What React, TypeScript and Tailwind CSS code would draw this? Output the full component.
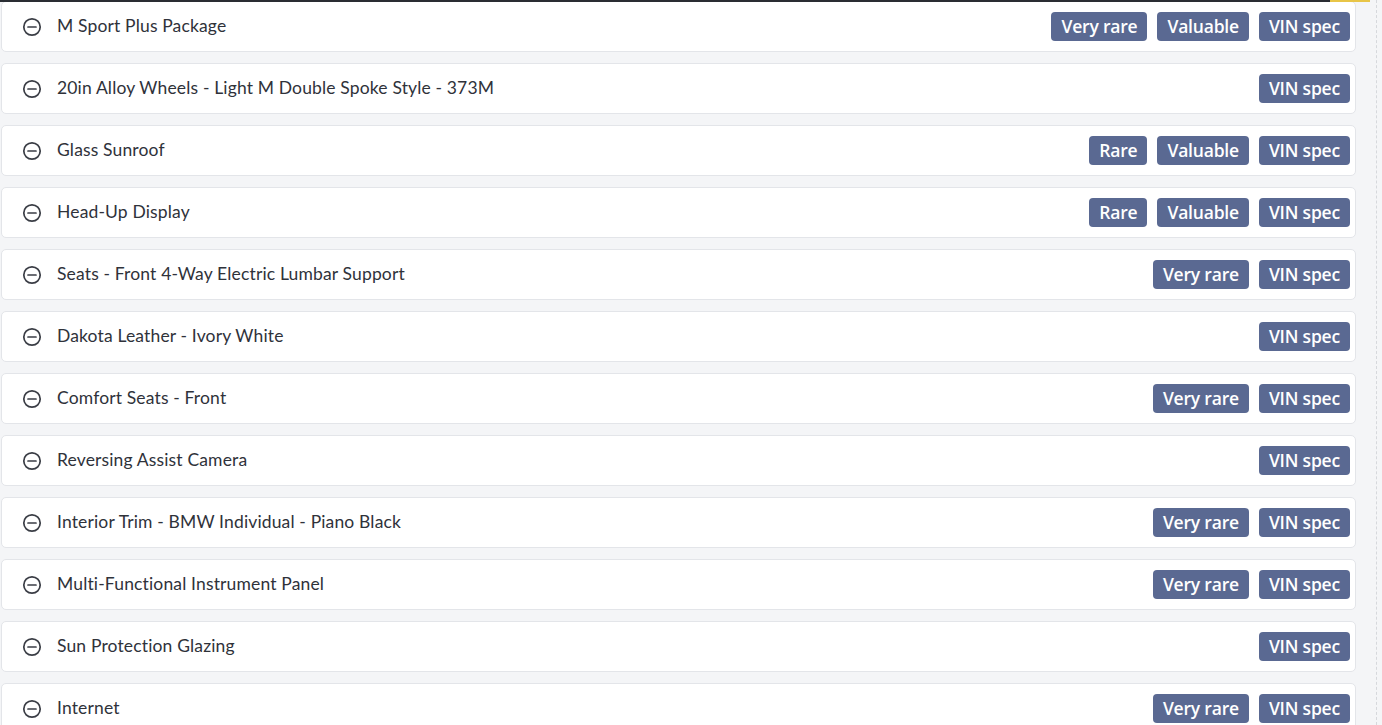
import React from "react";

const rows: { name: string; tags: string[] }[] = [
  { name: "M Sport Plus Package", tags: ["Very rare", "Valuable", "VIN spec"] },
  { name: "20in Alloy Wheels - Light M Double Spoke Style - 373M", tags: ["VIN spec"] },
  { name: "Glass Sunroof", tags: ["Rare", "Valuable", "VIN spec"] },
  { name: "Head-Up Display", tags: ["Rare", "Valuable", "VIN spec"] },
  { name: "Seats - Front 4-Way Electric Lumbar Support", tags: ["Very rare", "VIN spec"] },
  { name: "Dakota Leather - Ivory White", tags: ["VIN spec"] },
  { name: "Comfort Seats - Front", tags: ["Very rare", "VIN spec"] },
  { name: "Reversing Assist Camera", tags: ["VIN spec"] },
  { name: "Interior Trim - BMW Individual - Piano Black", tags: ["Very rare", "VIN spec"] },
  { name: "Multi-Functional Instrument Panel", tags: ["Very rare", "VIN spec"] },
  { name: "Sun Protection Glazing", tags: ["VIN spec"] },
  { name: "Internet", tags: ["Very rare", "VIN spec"] },
];

function MinusCircle() {
  return (
    <svg width="20" height="20" viewBox="0 0 20 20" fill="none" className="shrink-0">
      <circle cx="10" cy="10" r="8.2" stroke="#3a3d45" strokeWidth="1.7" />
      <line x1="6" y1="10" x2="14" y2="10" stroke="#3a3d45" strokeWidth="1.7" strokeLinecap="round" />
    </svg>
  );
}

export default function App() {
  return (
    <div
      className="relative w-[1382px] h-[725px] overflow-hidden bg-[#f4f5f7]"
      style={{ fontFamily: "Lato, 'Noto Sans', sans-serif" }}
    >
      <div className="absolute top-0 left-0 w-[1330px] h-[2px] bg-[#2a2d33]" />
      <div className="absolute top-0 left-[1330px] w-[40px] h-[2px] bg-[#e8c547]" />
      <div className="absolute top-0 left-[1376px] h-full border-l border-dashed border-[#d6d8dc]" />
      <div className="flex flex-col gap-[11px] pl-[1px] pt-[1px] w-[1356px]">
        {rows.map((r) => (
          <div
            key={r.name}
            className="h-[51px] flex items-center bg-white border border-[#e3e5e9] rounded-[5px] pl-[20px] pr-[5px]"
          >
            <MinusCircle />
            <span className="ml-[15px] text-[17.5px] text-[#2f323a] tracking-[0.15px]">{r.name}</span>
            <div className="ml-auto flex gap-[10px]">
              {r.tags.map((t) => (
                <span
                  key={t}
                  className="h-[29px] px-[10px] pb-[1px] flex items-center rounded-[4px] bg-[#5a6992] text-white text-[17.5px] font-semibold tracking-[-0.2px]"
                  style={{ fontFamily: "'Open Sans', sans-serif" }}
                >
                  {t}
                </span>
              ))}
            </div>
          </div>
        ))}
      </div>
    </div>
  );
}
